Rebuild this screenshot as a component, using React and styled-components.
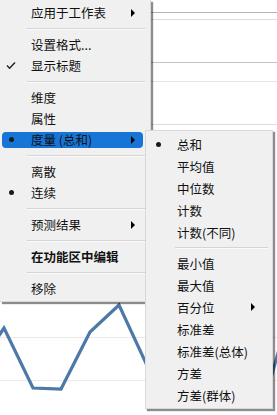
import React from "react"
import styled, { createGlobalStyle } from "styled-components"

const GlobalStyle = createGlobalStyle`
  html, body {
    margin: 0;
    padding: 0;
    background: #ffffff;
  }
`

const font_stack = `"Noto Sans CJK SC", "Noto Sans", sans-serif`

const Div__page = styled.div`
  position: relative;
  width: 277px;
  height: 415px;
  overflow: hidden;
  background: #ffffff;
  font-family: ${font_stack};
`

const Svg__chart = styled.svg`
  display: block;
  width: 277px;
  height: 415px;
`

// popup menus float over the chart, so they are placed absolutely
const Div__menu = styled.div`
  position: absolute;
  left: ${(p) => p.cfg.left}px;
  top: ${(p) => p.cfg.top}px;
  width: ${(p) => p.cfg.width}px;
  padding: ${(p) => p.cfg.padTop}px 0 2px;
  box-sizing: border-box;
  background: #f0f0f0;
  border-right: 1px solid #d9d9d9;
  border-bottom: 1px solid #d9d9d9;
  border-left: ${(p) => (p.cfg.edge ? "1px solid #d9d9d9" : "none")};
  border-top: ${(p) => (p.cfg.edge ? "1px solid #d9d9d9" : "none")};
  box-shadow: 2px 2px 1px rgba(0, 0, 0, 0.45);
  display: flex;
  flex-direction: column;
  isolation: isolate;
`

const Div__item = styled.div`
  position: relative;
  display: grid;
  grid-template-columns: ${(p) => p.cfg.markCol}px 1fr ${(p) => p.cfg.arrowCol}px;
  column-gap: ${(p) => p.cfg.gap}px;
  align-items: center;
  height: ${(p) => p.cfg.itemH}px;
  font-size: 12.5px;
  font-weight: ${(p) => (p.bold ? 700 : 400)};
  color: #111111;
  white-space: nowrap;

  &::before {
    content: "";
    display: ${(p) => (p.active ? "block" : "none")};
    position: absolute;
    z-index: -1;
    left: 2px;
    right: 7px;
    top: 3px;
    bottom: 2px;
    border-radius: 4px;
    background: #1675d6;
  }
`

const Span__mark = styled.span`
  display: flex;
  align-items: center;
  justify-content: center;
`

const Span__dot = styled.span`
  display: block;
  width: 5px;
  height: 5px;
  border-radius: 50%;
  background: #1a1a1a;
`

const Span__arrow = styled.span`
  justify-self: start;
  width: 0;
  height: 0;
  border-left: 4px solid #000;
  border-top: 4px solid transparent;
  border-bottom: 4px solid transparent;
`

const Div__separator = styled.div`
  height: ${(p) => p.cfg.sepH}px;
  display: flex;
  align-items: center;
  padding-left: ${(p) => p.cfg.sepLeft}px;
  padding-right: ${(p) => p.cfg.sepRight}px;

  &::after {
    content: "";
    flex: 1;
    height: 1px;
    background: #d5d5d5;
    box-shadow: 0 1px 0 #fafafa;
  }
`

const CheckMark = () => (
  <svg width="10" height="9" viewBox="0 0 10 9">
    <path d="M1 4.6 L3.6 7.2 L9 1.4" fill="none" stroke="#222" strokeWidth="1.4" />
  </svg>
)

const main_items = [
  { label: "应用于工作表", arrow: true },
  { sep: true },
  { label: "设置格式..." },
  { label: "显示标题", mark: "check" },
  { sep: true },
  { label: "维度" },
  { label: "属性" },
  { label: "度量 (总和)", mark: "dot", arrow: true, active: true },
  { sep: true },
  { label: "离散" },
  { label: "连续", mark: "dot" },
  { sep: true },
  { label: "预测结果", arrow: true },
  { sep: true },
  { label: "在功能区中编辑", bold: true },
  { sep: true },
  { label: "移除" },
]

const sub_items = [
  { label: "总和", mark: "dot" },
  { label: "平均值" },
  { label: "中位数" },
  { label: "计数" },
  { label: "计数(不同)" },
  { sep: true },
  { label: "最小值" },
  { label: "最大值" },
  { label: "百分位", arrow: true },
  { label: "标准差" },
  { label: "标准差(总体)" },
  { label: "方差" },
  { label: "方差(群体)" },
]

const Menu = ({ items, cfg }) => (
  <Div__menu cfg={cfg}>
    {items.map((it, i) =>
      it.sep ? (
        <Div__separator key={i} cfg={cfg} />
      ) : (
        <Div__item key={i} cfg={cfg} active={it.active} bold={it.bold}>
          <Span__mark>
            {it.mark === "dot" && <Span__dot />}
            {it.mark === "check" && <CheckMark />}
          </Span__mark>
          <span>{it.label}</span>
          {it.arrow ? <Span__arrow /> : <span />}
        </Div__item>
      )
    )}
  </Div__menu>
)

const main_cfg = {
  left: 0,
  top: 0,
  width: 151,
  padTop: 2,
  edge: false,
  itemH: 21,
  sepH: 11,
  sepLeft: 27,
  sepRight: 5,
  markCol: 22,
  gap: 9,
  arrowCol: 19,
}

const sub_cfg = {
  left: 145,
  top: 130,
  width: 128,
  padTop: 2,
  edge: true,
  itemH: 22,
  sepH: 9,
  sepLeft: 29,
  sepRight: 4,
  markCol: 25,
  gap: 6,
  arrowCol: 21,
}

const grid_lines = [
  { y: 12.5, c: "#b4b4b4" },
  { y: 19.5, c: "#dcdcdc" },
  { y: 62.5, c: "#c4c4c4" },
  { y: 81.5, c: "#e6e6e6" },
  { y: 124.5, c: "#dcdcdc" },
  { y: 337.5, c: "#e9e9e9" },
  { y: 380.5, c: "#e9e9e9" },
]

const App = () => {
  return (
    <>
      <GlobalStyle />
      <Div__page>
        <Svg__chart viewBox="0 0 277 415">
          {grid_lines.map((g) => (
            <line key={g.y} x1="0" x2="277" y1={g.y} y2={g.y} stroke={g.c} strokeWidth="1" />
          ))}
          <polyline
            points="-4,340 4,328 33,388 61,389 90,332 119,305 150,372 200,330 240,395 271,378 280,346"
            fill="none"
            stroke="#4e79a7"
            strokeWidth="3.2"
          />
        </Svg__chart>
        <Menu items={main_items} cfg={main_cfg} />
        <Menu items={sub_items} cfg={sub_cfg} />
      </Div__page>
    </>
  )
}

export default App
